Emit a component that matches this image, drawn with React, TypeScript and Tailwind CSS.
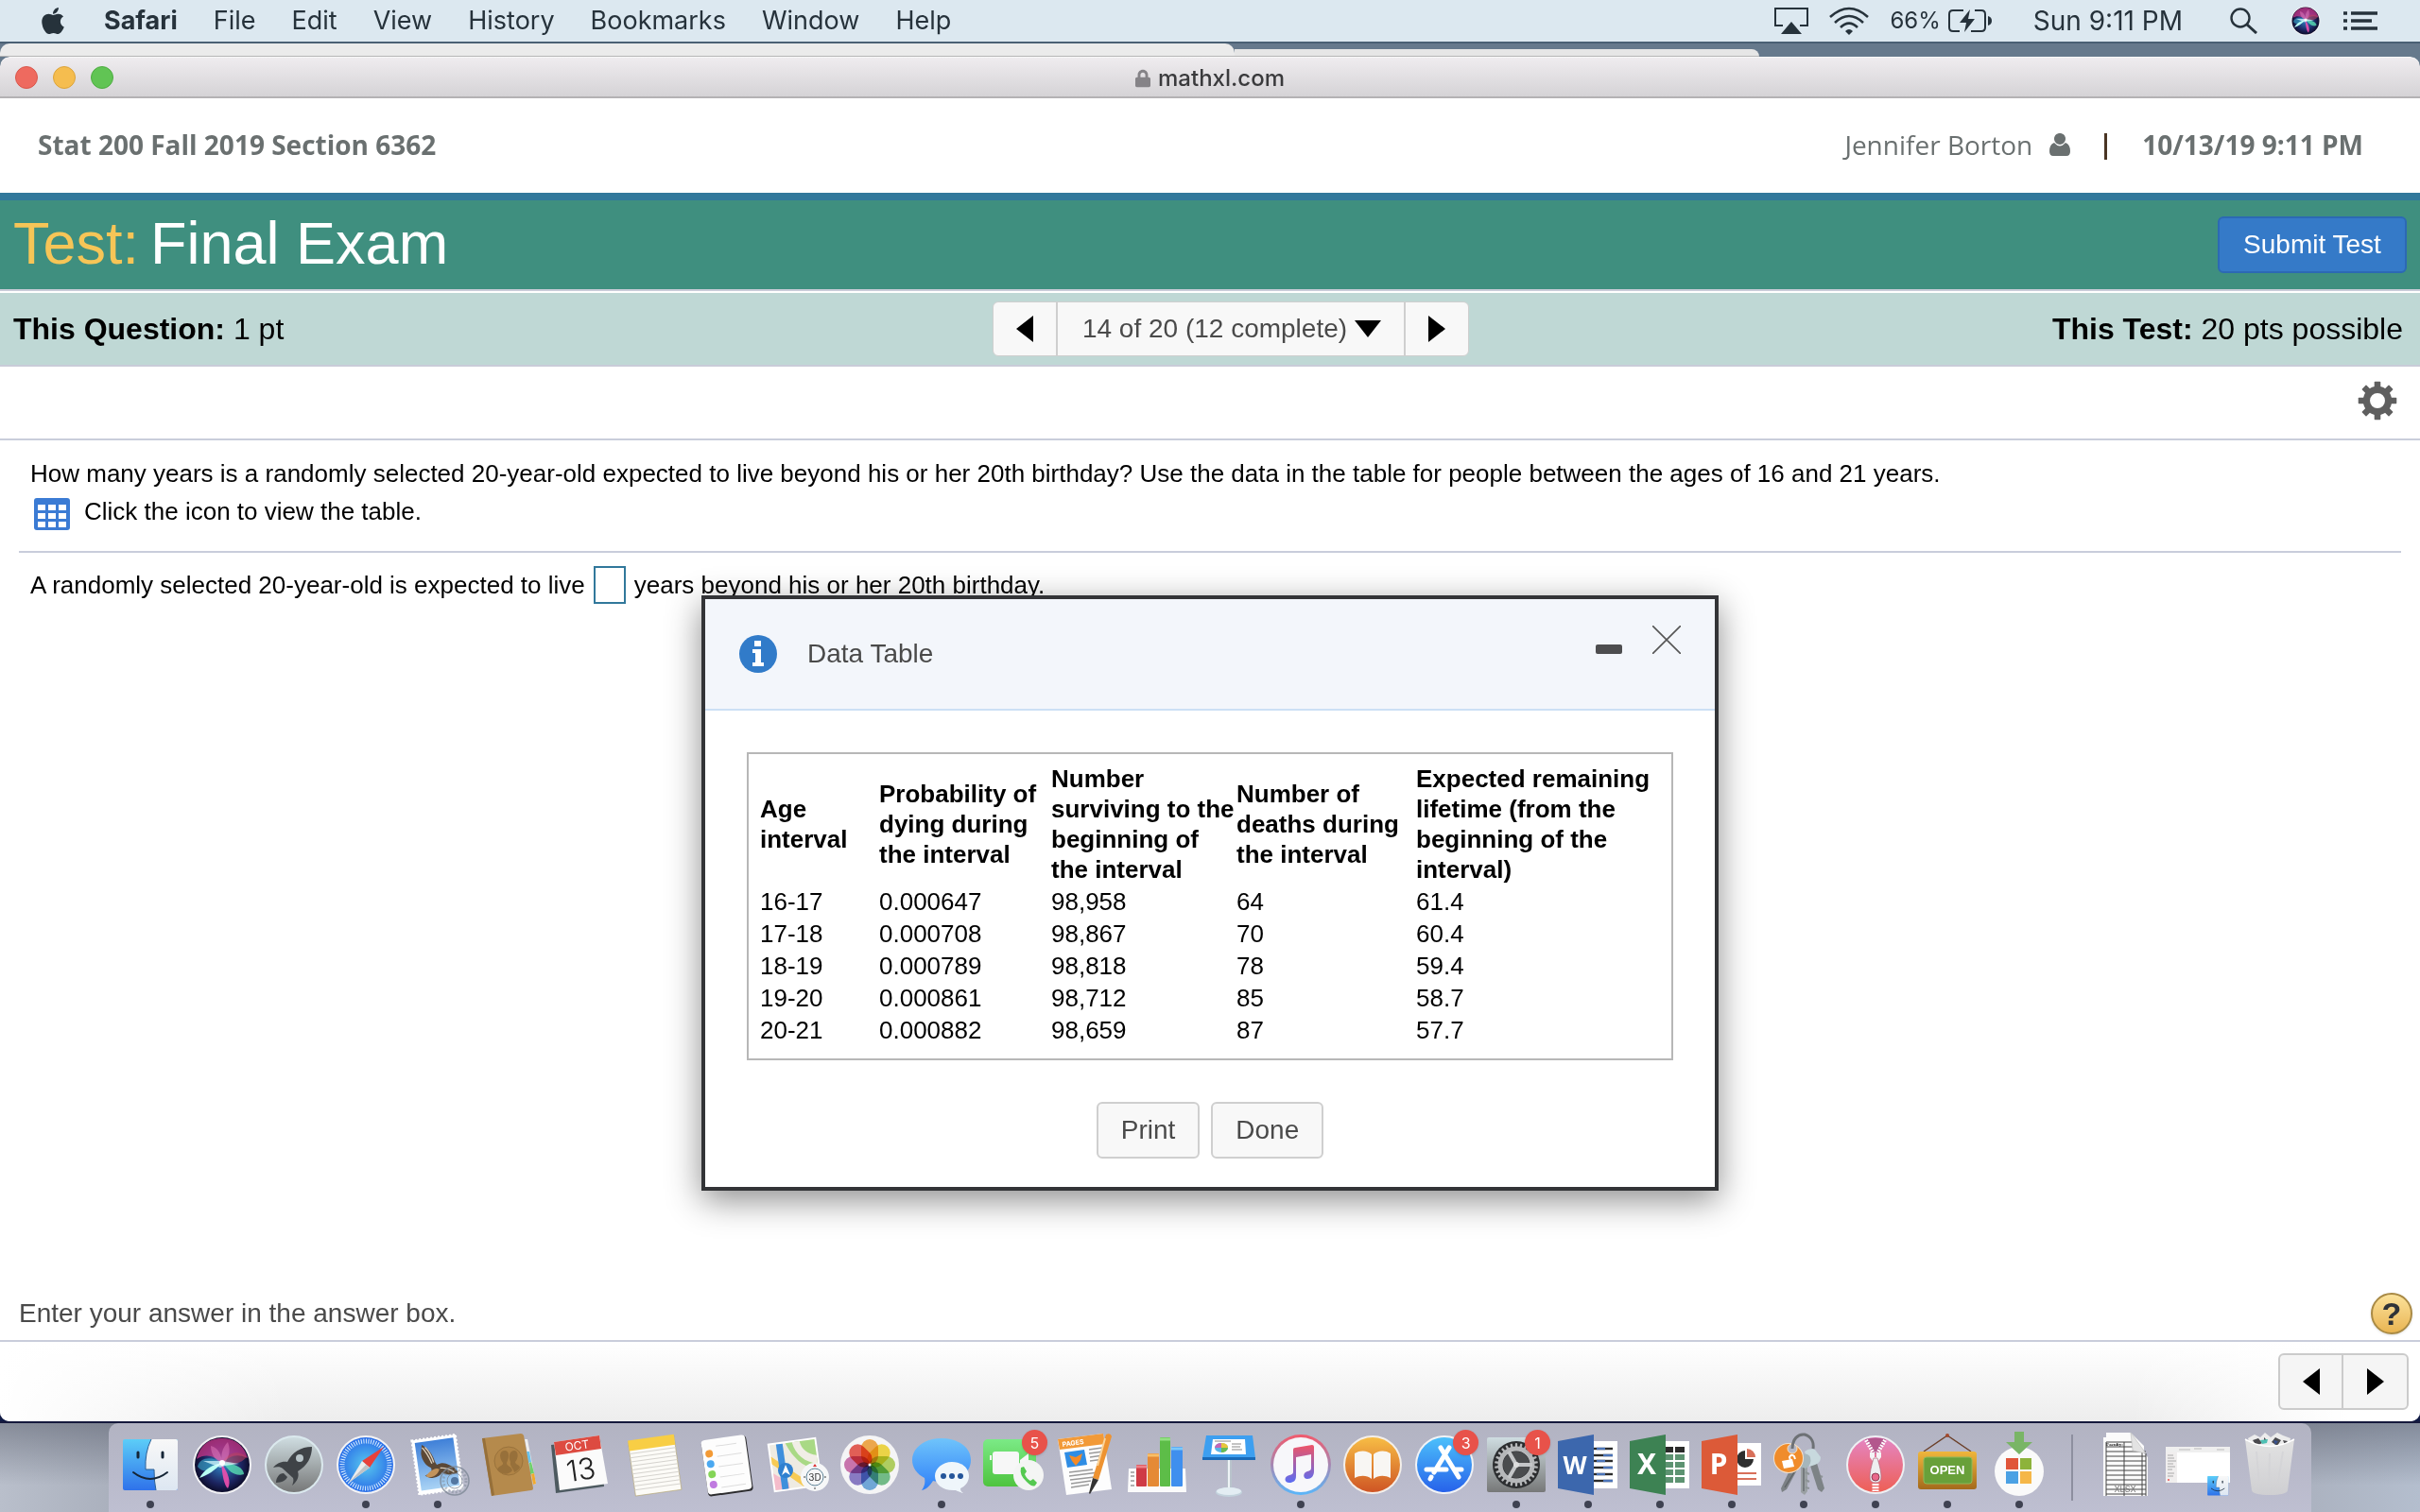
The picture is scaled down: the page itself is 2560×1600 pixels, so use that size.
import type { ReactNode } from 'react';
import { FaApple, FaLock } from 'react-icons/fa';

const menus = ['File', 'Edit', 'View', 'History', 'Bookmarks', 'Window', 'Help'];

const columns = [
	{ width: 'w-[126px]', lines: ['Age', 'interval'] },
	{ width: 'w-[182px]', lines: ['Probability of', 'dying during', 'the interval'] },
	{ width: 'w-[196px]', lines: ['Number', 'surviving to the', 'beginning of', 'the interval'] },
	{ width: 'w-[190px]', lines: ['Number of', 'deaths during', 'the interval'] },
	{ width: 'w-auto', lines: ['Expected remaining', 'lifetime (from the', 'beginning of the', 'interval)'] },
];

const rows = [
	['16-17', '0.000647', '98,958', '64', '61.4'],
	['17-18', '0.000708', '98,867', '70', '60.4'],
	['18-19', '0.000789', '98,818', '78', '59.4'],
	['19-20', '0.000861', '98,712', '85', '58.7'],
	['20-21', '0.000882', '98,659', '87', '57.7'],
];

const SANS = "font-['Liberation_Sans',Arial,sans-serif]";

/* ---------- small glyphs ---------- */

const Triangle = ({ dir }: { dir: 'left' | 'right' | 'down' }) => {
	if (dir === 'down') {
		return (
			<svg className="w-7 h-[18px]" viewBox="0 0 28 18">
				<path d="M0 0H28L14 18Z" />
			</svg>
		);
	}
	return (
		<svg className="w-[18px] h-7" viewBox="0 0 18 28">
			<path d={dir === 'left' ? 'M18 0V28L0 14Z' : 'M0 0V28L18 14Z'} />
		</svg>
	);
};

const SiriArt = () => (
	<>
		<circle cx="32" cy="32" r="31" fill="#f1f1f4" />
		<circle cx="32" cy="32" r="29" fill="url(#siri)" />
		<path d="M5 26C8 12 18 4 32 4C46 4 56 13 59 25C48 20 40 22 32 31C24 22 14 20 5 26Z" fill="#d6398f" opacity=".7" />
		<path d="M32 30C38 18 50 16 58 24C50 32 42 32 32 30Z" fill="#b8425f" opacity=".6" />
		<path d="M6 34C8 24 22 22 32 31C24 38 12 42 6 34Z" fill="#35a3c4" opacity=".65" />
		<path d="M33 30C44 30 55 35 55 42C46 45 39 39 33 30Z" fill="#59e0b4" opacity=".8" />
		<path d="M32 30C24 38 17 43 8 46C14 36 22 32 32 30Z" fill="#b8fff4" />
		<path d="M31 30C38 40 42 50 38 57C34 54 32 42 31 30Z" fill="#f04fae" opacity=".9" />
		<path d="M20 12C28 14 32 22 32 32C26 28 20 22 20 12ZM38 8C42 18 38 28 32 32C30 22 32 14 38 8Z" fill="#ff9bd8" opacity=".35" />
		<path d="M12 28L32 28L50 31L35 33L30 35Z" fill="#dffcff" opacity=".7" />
		<circle cx="32" cy="30" r="3" fill="#fff" />
	</>
);

const FinderArt = () => (
	<>
		<rect x="3" y="5" width="58" height="54" rx="2" fill="url(#finder)" />
		<path d="M33 5H59Q61 5 61 7V57Q61 59 59 59H38Q36 50 36 37H27Q26 19 33 5Z" fill="url(#paper)" />
		<path d="M33 5Q26 19 27 37H36Q36 50 38 59" fill="none" stroke="#2a5f95" strokeWidth="1" />
		<path d="M19 19V24M45 19V24" stroke="#152536" strokeWidth="3" strokeLinecap="round" />
		<path d="M14 40Q32 54 50 40" fill="none" stroke="#152536" strokeWidth="2" strokeLinecap="round" />
	</>
);

const Gear = ({ teeth, r, children }: { teeth: number; r: number; children?: ReactNode }) => (
	<>
		{Array.from({ length: teeth }, (_, i) => (
			<rect
				key={i}
				x={32 - (r * 1.3) / teeth}
				y={32 - r}
				width={(r * 2.6) / teeth}
				height={r * 0.35}
				rx="1"
				transform={`rotate(${(360 / teeth) * i} 32 32)`}
			/>
		))}
		{children}
	</>
);

/* ---------- dock artwork, each drawn in a 64 x 64 box ---------- */

const art: Record<string, ReactNode> = {
	Finder: <FinderArt />,
	Siri: <SiriArt />,
	Launchpad: (
		<>
			<circle cx="32" cy="32" r="31" fill="#dbe9ee" />
			<circle cx="32" cy="32" r="29" fill="url(#silver)" />
			<path
				d="M51 13C39 13 30 19 25 29C19 28 13 31 10 35C14 34 18 34 20 36L31 46C32 49 31 51 30 54C35 50 38 45 36 39C46 33 51 24 51 13Z"
				fill="#3f4347"
			/>
			<path d="M21 41C16 41 13 46 13 51C19 51 24 48 25 45Z" fill="#3f4347" />
			<circle cx="38" cy="25" r="4" fill="#b9c5c9" />
		</>
	),
	Safari: (
		<>
			<circle cx="32" cy="32" r="31" fill="#f3f3f5" />
			<circle cx="32" cy="32" r="29" fill="url(#safari)" />
			<circle cx="32" cy="32" r="25" fill="none" stroke="#d7ecff" strokeWidth="5" strokeDasharray="1 1.6" />
			<path d="M51 13L28 28L36 35Z" fill="#e8413b" />
			<path d="M14 51L28 28L36 35Z" fill="#ececec" />
			<path d="M14 51L32 32L36 35Z" fill="#bfc3c7" />
		</>
	),
	Mail: (
		<>
			<g transform="rotate(-8 31 31)">
				<rect x="8" y="3" width="47" height="58" fill="#fff" stroke="#fff" strokeWidth="2" strokeDasharray="2 2" />
				<rect x="11" y="6" width="41" height="51" fill="url(#sky)" />
				<path
					d="M18 9C20 10 25 15 27 20C29 24 29 29 31 32C36 30 40 31 44 34C48 36 51 40 52 43C47 45 40 45 35 41C33 44 29 46 22 45L17 42L24 39C25 37 25 35 24 34C19 31 16 25 16 18Z"
					fill="#5b4836"
				/>
				<path d="M18 12C22 17 24 23 26 30M21 12C25 17 27 24 28 29M34 36C40 36 44 39 48 42" fill="none" stroke="#d9cdbb" strokeWidth="1.4" />
				<path d="M18 42C23 38 28 34 33 37C31 42 26 45 20 44Z" fill="#c1935c" />
			</g>
			<circle cx="50" cy="49" r="15" fill="none" stroke="#7d8795" strokeWidth="1.5" opacity=".8" />
			<circle cx="50" cy="49" r="12" fill="none" stroke="#7d8795" strokeWidth="3" strokeDasharray="2 2" opacity=".5" />
			<circle cx="50" cy="49" r="8" fill="none" stroke="#7d8795" strokeWidth="1" opacity=".8" />
			<circle cx="50" cy="49" r="4" fill="#41628c" opacity=".8" />
		</>
	),
	Contacts: (
		<>
			<path d="M48 5L51 5L60 52L57 53Z" fill="#eee" />
			<path d="M50 18L53 18L55 29L52 30Z" fill="#69c3ec" />
			<path d="M53 30L55 29L58 41L54 42Z" fill="#6fd06a" />
			<path d="M55 42L58 41L60 52L57 53Z" fill="#f0a92e" />
			<path d="M3 4L44 -1Q46 -1 47 1L57 57Q57 59 55 59L13 65Z" fill="#b58a4c" />
			<path d="M3 4L6 4L16 64L13 65Z" fill="#96703a" />
			<circle cx="31" cy="28" r="15" fill="#b08446" stroke="#9a733c" strokeWidth="1" />
			<path d="M19 37C20 33 26 33 25 30C20 23 22 17 27 17C32 17 32 24 29 30C29 34 34 33 35 38C30 44 23 42 19 37Z" fill="#97703a" />
			<path d="M33 29C30 22 33 16 38 17C42 19 41 26 38 29C38 32 43 32 43 35C41 38 39 39 37 40C36 35 32 34 33 29Z" fill="#97703a" />
		</>
	),
	Calendar: (
		<>
			<path d="M0 11L5 62L56 55L52 5Z" fill="#4d5a60" />
			<path d="M3 8L51 1L60 52L9 59Z" fill="#fbfbfb" />
			<path d="M3 8L51 1L53 15L5 22Z" fill="#dd4b41" />
			<text x="28" y="16" transform="rotate(-8 28 16)" textAnchor="middle" fontSize="12" fill="#fff" className="font-[Inter,sans-serif]">
				OCT
			</text>
			<text x="33" y="48" transform="rotate(-8 33 48)" textAnchor="middle" fontSize="31" fill="#222" className="font-[Inter,sans-serif] font-light">
				13
			</text>
		</>
	),
	Notes: (
		<g transform="rotate(-8 32 32)">
			<rect x="8" y="4" width="49" height="58" fill="#fcfbf7" stroke="#b3a36a" strokeWidth=".6" />
			<rect x="8" y="3" width="49" height="11" fill="#f8ce45" />
			{Array.from({ length: 10 }, (_, i) => (
				<path key={i} d={`M8 ${17 + i * 4.3}H57`} stroke="#d5d3ce" strokeWidth="1" />
			))}
		</g>
	),
	Reminders: (
		<g transform="rotate(-8 32 32)">
			<rect x="9" y="4" width="48" height="59" rx="4" fill="#2c2c2e" />
			<rect x="9" y="3" width="47" height="58" rx="4" fill="#fdfdfd" />
			{['#f39a35', '#4aa8f0', '#84d557', '#c07ae0'].map((c, i) => (
				<g key={c}>
					<circle cx="16" cy={18 + i * 11} r="4" fill={c} />
					<path d={`M24 ${22 + i * 11}H50`} stroke="#ddd" />
				</g>
			))}
			<path d="M24 11H46" stroke="#ddd" />
		</g>
	),
	Maps: (
		<>
			<g transform="rotate(-8 29 32)">
				<rect x="3" y="6" width="52" height="52" fill="#fff" />
				<rect x="5" y="8" width="48" height="48" fill="#eeebe2" />
				<path d="M22 8H53V40C40 38 28 26 22 8Z" fill="#a9d985" />
				<path d="M29 8C31 22 40 31 53 34V25C44 23 38 17 37 8Z" fill="#f1eee6" />
				<path d="M5 20L45 56H35L5 28Z" fill="#f7cb55" />
				<path d="M5 38L20 50V56H5Z" fill="#f5bccb" />
				<path d="M12 8H19V56H12Z" fill="#3f8fdc" />
			</g>
			<circle cx="19" cy="38" r="8" fill="#2f80d0" />
			<path d="M19 32L24 43L19 40L15 43Z" fill="#fff" />
			<circle cx="50" cy="45" r="15" fill="#f6f7f8" />
			<circle cx="50" cy="45" r="9" fill="none" stroke="#5d8296" />
			<path d="M50 31L52 34H48Z" fill="#d33" />
			<path d="M50 56V58M38 45H40M60 45H62" stroke="#444" />
			<text x="50" y="49" textAnchor="middle" fontSize="10" fill="#333" className="font-[Inter,sans-serif]">
				3D
			</text>
		</>
	),
	Photos: (
		<>
			<circle cx="32" cy="32" r="31" fill="#f5f5f6" />
			{['#f5a031', '#f4d629', '#a9cf48', '#5fb778', '#5b9fd8', '#7a68c0', '#c861a4', '#e8473c'].map((c, i) => (
				<rect
					key={c}
					x="23"
					y="5"
					width="18"
					height="27"
					rx="9"
					fill={c}
					opacity=".85"
					className="mix-blend-multiply"
					transform={`rotate(${i * 45} 32 32)`}
				/>
			))}
			<circle cx="32" cy="32" r="1.5" fill="#fff" />
		</>
	),
	Messages: (
		<>
			<path
				d="M32 4C50 4 63 14 63 27C63 41 50 50 32 50C29 50 26 50 23 49C20 54 16 58 11 59C14 55 15 51 14 46C6 42 1 35 1 27C1 14 14 4 32 4Z"
				fill="url(#messages)"
			/>
			<path
				d="M43 29C54 29 61 36 61 44C61 50 57 55 52 57C52 59 53 61 55 62C51 61 49 60 47 59C34 60 25 53 25 44C25 36 33 29 43 29Z"
				fill="#eff6fb"
			/>
			<circle cx="34" cy="44" r="3" fill="#24559a" />
			<circle cx="43" cy="44" r="3" fill="#24559a" />
			<circle cx="52" cy="44" r="3" fill="#24559a" />
		</>
	),
	FaceTime: (
		<>
			<rect x="0" y="5" width="56" height="50" rx="5" fill="url(#green)" />
			<rect x="10" y="18" width="28" height="24" rx="3" fill="#f7f7f7" />
			<path d="M39 27L48 20V38L39 33Z" fill="#f7f7f7" />
			<path d="M8 22V27" stroke="#f7f7f7" strokeWidth="2" />
			<circle cx="48" cy="43" r="16" fill="#f4f5f4" />
			<path d="M40 35L43 34L46 39L44 42Q46 47 50 49L53 47L57 51L55 54Q52 56 46 50Q38 43 40 35Z" fill="#55c951" />
		</>
	),
	Pages: (
		<>
			<path d="M3 5L51 -1L60 58L12 64Z" fill="#fdfdfd" />
			<path d="M3 5L51 -1L53 10L5 16Z" fill="#f29a38" />
			<text x="8" y="13" transform="rotate(-8 8 13)" fontSize="7" fill="#fff" className="font-[Inter,sans-serif] font-bold">
				PAGES
			</text>
			<path d="M10 19L31 16L34 32L13 35Z" fill="#2f8de4" />
			<path d="M15 22L22 24L29 20L27 27L22 33L18 28Z" fill="#f58b27" />
			<path
				d="M36 16L50 14M36 20L51 18M37 24L51 22M37 28L52 26M15 40L40 37M15 44L46 40M16 48L42 45M17 52L38 49M17 56L36 53"
				stroke="#9a9a9a"
				strokeWidth="1.4"
			/>
			<path d="M54 0Q59 -2 60 2L46 48L40 46Z" fill="#ee9331" />
			<path d="M40 46L46 48L37 63L36 62Z" fill="#333" />
			<path d="M53 4L45 33" stroke="#fbd49a" strokeWidth="2" />
		</>
	),
	Numbers: (
		<>
			<path d="M2 36H62L63 61H1Z" fill="#fbfbfb" />
			<path d="M4 40H8M4 44H8M4 49H8M4 54H8" stroke="#999" strokeWidth="1.4" />
			<rect x="10" y="32" width="11" height="23" rx="1" fill="#cf3b45" />
			<rect x="22" y="20" width="12" height="35" rx="1" fill="#e58a35" />
			<rect x="35" y="3" width="11" height="52" rx="1" fill="#5dbd48" />
			<rect x="47" y="13" width="12" height="42" rx="1" fill="#3f8fee" />
			<path d="M10 34H21" stroke="#ee8288" strokeWidth="3" />
			<path d="M22 22H34" stroke="#f8bf68" strokeWidth="3" />
			<path d="M35 5H46" stroke="#93e083" strokeWidth="3" />
			<path d="M47 15H59" stroke="#7cc9fa" strokeWidth="3" />
		</>
	),
	Keynote: (
		<>
			<rect x="30" y="26" width="5" height="34" fill="#b9c4cc" />
			<rect x="31" y="26" width="2" height="34" fill="#eef3f6" />
			<ellipse cx="32" cy="61" rx="14" ry="5" fill="#c3d3dd" />
			<ellipse cx="32" cy="60" rx="13" ry="4" fill="#e3edf3" />
			<path d="M8 1H57L60 25H4Z" fill="#3d9ff0" />
			<path d="M4 24H60V27H4Z" fill="#1a6ab8" />
			<path d="M15 5H49L50 21H13Z" fill="#fff" />
			<ellipse cx="24" cy="14" rx="7" ry="5" fill="#59b4e8" />
			<path d="M24 14V9Q31 9 31 14Z" fill="#e8c53a" />
			<path d="M24 14L31 14Q30 19 24 19Z" fill="#69bb53" />
			<path d="M24 14L17 14Q18 9 24 9Z" fill="#c566b5" />
			<path d="M35 10H45M35 13H44M35 16H46M17 7H34" stroke="#888" />
		</>
	),
	iTunes: (
		<>
			<circle cx="32" cy="32" r="32" fill="url(#itunes)" />
			<circle cx="32" cy="32" r="29" fill="#f7f7fa" />
			<path
				d="M24 16Q24 14 26 14L44 11Q46 11 46 13V39C46 44 43 47 39 47C34 47 34 40 39 39C42 38 43 38 43 35V21L27 24V44C27 49 24 51 20 51C14 51 14 44 20 43C23 42 24 42 24 39Z"
				fill="url(#note)"
			/>
		</>
	),
	Books: (
		<>
			<circle cx="32" cy="32" r="31" fill="#f3efea" />
			<circle cx="32" cy="32" r="29" fill="url(#books)" />
			<path d="M13 20C19 16 27 17 31 21V47C26 43 19 43 13 46ZM51 20C45 16 37 17 33 21V47C38 43 45 43 51 46Z" fill="#f8f6f3" />
		</>
	),
	'App Store': (
		<>
			<circle cx="32" cy="32" r="31" fill="#f1f3f6" />
			<circle cx="32" cy="32" r="29" fill="url(#appstore)" />
			<g stroke="#fff" strokeWidth="5" strokeLinecap="round">
				<path d="M37 14L21 40M28 14L47 45M13 37H34M44 37H50M18 45L17 47" />
			</g>
		</>
	),
	'System Preferences': (
		<>
			<rect x="1" y="3" width="62" height="58" rx="2" fill="url(#silver)" />
			<circle cx="32" cy="32" r="25" fill="#2c2e30" />
			<g fill="#b6b8ba">
				<Gear teeth={26} r={23}>
					<circle cx="32" cy="32" r="17" fill="none" stroke="#b6b8ba" strokeWidth="5" />
				</Gear>
			</g>
			<circle cx="32" cy="32" r="14" fill="#4a4c4e" />
			<path d="M32 32H49M32 32L24 18M32 32L24 46" stroke="#c4c6c8" strokeWidth="4" />
			<circle cx="32" cy="32" r="3" fill="#ddd" />
		</>
	),
	Word: (
		<>
			<rect x="34" y="7" width="29" height="50" fill="#fff" />
			{[15, 22, 28, 35, 42, 49].map((y, i) => (
				<g key={y} strokeWidth="2.4">
					<path d={`M38 ${y}H58`} stroke="#2b2b2b" />
					<path d={`M${i % 2 ? 48 : 41} ${y}H${i % 2 ? 58 : 50}`} stroke="#4b74b8" />
				</g>
			))}
			<path d="M0 7L38 0V64L0 57Z" fill="#3c67ad" />
			<text x="18" y="42" textAnchor="middle" fontSize="26" fill="#fff" className="font-['Noto_Sans',sans-serif] font-bold">
				W
			</text>
		</>
	),
	Excel: (
		<>
			<rect x="34" y="7" width="29" height="50" fill="#fff" />
			{[13, 21, 29, 37, 45].map((y, i) => (
				<path key={y} d={`M38 ${y}H46V${y + 6}H38ZM48 ${y}H58V${y + 6}H48Z`} fill={i === 0 ? '#2b2b2b' : '#5d9371'} />
			))}
			<path d="M0 7L38 0V64L0 57Z" fill="#3d8253" />
			<text x="18" y="42" textAnchor="middle" fontSize="30" fill="#fff" className="font-['Noto_Sans',sans-serif] font-bold">
				X
			</text>
		</>
	),
	PowerPoint: (
		<>
			<rect x="34" y="9" width="29" height="45" fill="#fff" />
			<path d="M46 17A9 9 0 1 0 55 26H46Z" fill="#2e2e2e" />
			<path d="M48 15A9 9 0 0 1 57 24H48Z" fill="#d8705a" />
			<path d="M38 41H58M38 47H58" stroke="#d8705a" strokeWidth="2" />
			<path d="M0 7L38 0V64L0 57Z" fill="#dc5a38" />
			<text x="18" y="42" textAnchor="middle" fontSize="30" fill="#fff" className="font-['Noto_Sans',sans-serif] font-bold">
				P
			</text>
		</>
	),
	'Keychain Access': (
		<>
			<path d="M22 28L29 30L14 58L9 61L8 57Z" fill="#7c8185" />
			<path d="M29 28H36V60L33 64L29 61Z" fill="#9aa0a3" />
			<path d="M32 34V60M12 56L22 40" stroke="#5d6164" strokeWidth="1.2" />
			<path d="M38 30L45 27L54 57L51 61L47 58Z" fill="#7d8386" />
			<path d="M34 40L38 42M34 48L38 50M34 56L38 57M50 44L52 45" stroke="#8d9396" strokeWidth="2" />
			<path d="M33 18Q38 14 44 16L50 24Q50 30 44 32L38 34Z" fill="#c8d9de" />
			<path d="M28 22Q36 18 39 24Q41 32 34 36L28 34Z" fill="#a6b6bb" />
			<circle cx="16" cy="25" r="16" fill="#f3e2cd" />
			<circle cx="16" cy="25" r="15" fill="#f08c2b" />
			<circle cx="20" cy="15" r="5" fill="#b6b8c6" stroke="#f6e0c0" />
			<path d="M20 15C20 5 26 -1 33 0C40 2 43 8 42 15" fill="none" stroke="#6d7175" strokeWidth="3" />
			<path d="M9 28L20 26L22 34L11 36Z" fill="#fff" />
			<path d="M18 27L17 24Q19 20 22 23L23 26" fill="none" stroke="#fff" strokeWidth="2" />
		</>
	),
	Unarchiver: (
		<>
			<circle cx="32" cy="32" r="31" fill="#eef0f3" />
			<circle cx="32" cy="32" r="29" fill="url(#zip)" />
			<path d="M21 5Q32 2 43 5L34 20H30Z" fill="#b3578d" />
			<path d="M22 6L30 20M42 6L34 20" stroke="#fff" strokeWidth="4" strokeDasharray="1.8 1.2" />
			<path d="M32 52V60" stroke="#fff" strokeWidth="7" strokeDasharray="2 1.2" />
			<path d="M26 19H31V24H33V19H38V24L35 28H29L26 24Z" fill="#f3f3f5" />
			<path d="M30 25H34Q38 38 38 45Q38 51 32 51Q26 51 26 45Q26 38 30 25Z" fill="#eeeef0" stroke="#b06a80" strokeWidth=".7" />
			<circle cx="32" cy="45" r="4" fill="#e9688a" stroke="#8d3d52" />
		</>
	),
	'Open Sign': (
		<>
			<path d="M7 18L32 1L57 18" fill="none" stroke="#6b3f28" strokeWidth="1.4" />
			<circle cx="32" cy="1" r="2" fill="#a3492c" />
			<rect x="1" y="18" width="62" height="40" rx="3" fill="url(#gold)" />
			<rect x="7" y="24" width="51" height="28" rx="3" fill="#68a03a" stroke="#8db95b" />
			<text x="32" y="42" textAnchor="middle" fontSize="13" fill="#fff" className="font-['Liberation_Sans',sans-serif] font-bold">
				OPEN
			</text>
		</>
	),
	'Microsoft AutoUpdate': (
		<>
			<circle cx="32" cy="39" r="26" fill="#fafafa" />
			<path d="M18 25H31V37H18Z" fill="#e0553a" />
			<path d="M33 25H45V37H33Z" fill="#8db33b" />
			<path d="M18 39H31V52H18Z" fill="#4ba1e4" />
			<path d="M33 39H45V52H33Z" fill="#f5b748" />
			<path d="M27 -3H37V8H46L32 21L18 8H27Z" fill="#79b566" />
		</>
	),
	'Faculty.xlsx': (
		<>
			<path d="M12 -2H38L52 12V20L56 24V65H9V3H12Z" fill="#fbfbfb" />
			<path
				d="M12 8H40M12 13H44M12 18H54M12 23H54M12 28H54M12 33H54M12 38H54M12 43H54M12 48H54M12 53H54M12 58H54M12 63H54M12 8V65M31 8V65M50 18V65M54 20V65"
				stroke="#444"
				strokeWidth="1"
			/>
			<path d="M38 -2L40 17L54 20Z" fill="#e3e3e3" stroke="#bbb" strokeWidth=".6" />
			<text x="21" y="12" textAnchor="middle" fontSize="5" fill="#111" className="font-['Liberation_Serif',serif] font-bold">
				Faculty:
			</text>
			<text x="32" y="61" textAnchor="middle" fontSize="9" fill="#777" className="font-[Inter,sans-serif]">
				XLSX
			</text>
		</>
	),
	'Minimized Window': (
		<>
			<rect x="-2" y="13" width="68" height="38" fill="#fff" />
			<rect x="-2" y="13" width="68" height="6" fill="#efefef" />
			<rect x="-2" y="19" width="12" height="32" fill="#f0eeee" />
			<path d="M0 22H6M0 25H7M0 28H9M0 31H6M0 34H8M0 37H5M0 41H7M0 44H6" stroke="#aaa" />
			<path d="M0 48H2" stroke="#e77" strokeWidth="2" />
			<path d="M12 16H24M28 15H36M52 16H60" stroke="#bbb" />
			<g transform="translate(41 42) scale(.38)">
				<FinderArt />
			</g>
		</>
	),
	Trash: (
		<>
			<path d="M9 4L16 0L22 3L27 -2L33 3L40 -2L46 1L54 4L52 14H12Z" fill="#ececec" />
			<path d="M14 6L20 4L24 9L18 12ZM34 8L38 3L44 6L40 12ZM26 3L29 6L26 8ZM46 6L51 7L48 11Z" fill="#4a4a4e" />
			<path d="M22 6L30 5L29 9L24 10Z" fill="#4fc0b4" />
			<path d="M36 6L41 7L38 11Z" fill="#37518e" />
			<path d="M6 5Q32 20 58 5L51 59Q50 64 32 64Q14 64 13 59Z" fill="url(#trash)" />
			<path d="M6 5Q32 20 58 5" fill="none" stroke="#fff" strokeWidth="1.5" />
			<path d="M18 18L21 54M32 20L31 56M46 18L41 50" stroke="#d3d3d6" strokeWidth="2" opacity=".7" />
		</>
	),
};

const apps: { name: string; running?: boolean; badge?: number }[] = [
	{ name: 'Finder', running: true },
	{ name: 'Siri' },
	{ name: 'Launchpad' },
	{ name: 'Safari', running: true },
	{ name: 'Mail', running: true },
	{ name: 'Contacts' },
	{ name: 'Calendar' },
	{ name: 'Notes' },
	{ name: 'Reminders' },
	{ name: 'Maps' },
	{ name: 'Photos' },
	{ name: 'Messages', running: true },
	{ name: 'FaceTime', badge: 5 },
	{ name: 'Pages' },
	{ name: 'Numbers' },
	{ name: 'Keynote' },
	{ name: 'iTunes', running: true },
	{ name: 'Books' },
	{ name: 'App Store', badge: 3 },
	{ name: 'System Preferences', running: true, badge: 1 },
	{ name: 'Word', running: true },
	{ name: 'Excel', running: true },
	{ name: 'PowerPoint', running: true },
	{ name: 'Keychain Access', running: true },
	{ name: 'Unarchiver', running: true },
	{ name: 'Open Sign', running: true },
	{ name: 'Microsoft AutoUpdate', running: true },
];

const shelf = [{ name: 'Faculty.xlsx' }, { name: 'Minimized Window' }, { name: 'Trash' }];

const gradients: [string, string, string][] = [
	['finder', '#5ccdf8', '#2f72ea'],
	['paper', '#f8f8f8', '#dde7f2'],
	['silver', '#cfdde1', '#777878'],
	['sky', '#3f80d8', '#a9d3f5'],
	['messages', '#6fc4fb', '#2f7ff8'],
	['green', '#7bea86', '#4fc43f'],
	['itunes', '#f3596b', '#58b7fb'],
	['note', '#ef5466', '#5a6cf2'],
	['books', '#f7bd45', '#cf5524'],
	['appstore', '#4cc0fb', '#2762ea'],
	['zip', '#e486c4', '#ee5f55'],
	['gold', '#efb63c', '#a46a1c'],
	['trash', '#e2e2e2', '#cfcfd2'],
];

const Gradients = () => (
	<svg className="absolute w-0 h-0" aria-hidden="true">
		<defs>
			{gradients.map(([id, from, to]) => (
				<linearGradient key={id} id={id} x1="0" y1="0" x2="0" y2="1">
					<stop offset="0" stopColor={from} />
					<stop offset="1" stopColor={to} />
				</linearGradient>
			))}
			<radialGradient id="siri">
				<stop offset="0" stopColor="#2f86c8" />
				<stop offset=".7" stopColor="#1c2460" />
				<stop offset="1" stopColor="#0d0d2b" />
			</radialGradient>
			<radialGradient id="safari">
				<stop offset="0" stopColor="#58c8ee" />
				<stop offset="1" stopColor="#2a6ee8" />
			</radialGradient>
		</defs>
	</svg>
);

const DockItem = ({ name, running, badge }: { name: string; running?: boolean; badge?: number }) => (
	<button type="button" aria-label={name} className="relative flex flex-col items-center flex-1 pt-3">
		<svg className="w-16 h-16 overflow-visible" viewBox="0 0 64 64">
			{art[name]}
		</svg>
		{running && <span className="w-2 h-2 mt-1.5 rounded-full bg-[#3f4251]" />}
		{badge && (
			<span className="absolute top-[7px] right-0.5 flex items-center justify-center rounded-full w-[27px] h-[27px] bg-[#e8524a] text-white text-base font-[Inter,sans-serif] shadow-sm">
				{badge}
			</span>
		)}
	</button>
);

/* ---------- page parts ---------- */

const MenuBar = () => (
	<header className="flex items-center justify-between h-[46px] pl-10 pr-[45px] bg-[#dce8f0] border-b-2 border-[#4a6074] text-[#26323b] text-[27px] leading-8 font-[Inter,sans-serif]">
		<nav className="flex items-center gap-[38px]">
			<button type="button" aria-label="Apple menu">
				<FaApple className="w-8 h-8" />
			</button>
			<button type="button" className="font-bold">
				Safari
			</button>
			{menus.map((menu) => (
				<button key={menu} type="button">
					{menu}
				</button>
			))}
		</nav>
		<div className="flex items-center">
			<svg className="w-9 h-7" viewBox="0 0 36 28" aria-label="AirPlay">
				<path d="M9 19H1V1H35V19H27" fill="none" stroke="#26323b" strokeWidth="2" />
				<path d="M18 15L29 28H7Z" fill="#26323b" />
			</svg>
			<svg className="w-[42px] h-[30px] ml-[22px]" viewBox="0 0 42 30" aria-label="Wi-Fi">
				<path d="M1 11Q21 -7 41 11M6 17Q21 3 36 17M12 22Q21 13 30 22" fill="none" stroke="#26323b" strokeWidth="2.6" />
				<path d="M17 26Q21 22 25 26L21 30Z" fill="#26323b" />
			</svg>
			<span className="ml-[22px] text-2xl leading-8">66%</span>
			<svg className="w-[46px] h-6 ml-2" viewBox="0 0 46 24" aria-label="Battery charging">
				<path d="M16 1H5Q1 1 1 5V19Q1 23 5 23H12M28 1H35Q39 1 39 5V19Q39 23 35 23H24" fill="none" stroke="#26323b" strokeWidth="2" />
				<path d="M23 0L12 14H19L17 24L28 10H21Z" fill="#26323b" />
				<path d="M42 7Q46 8 46 12Q46 16 42 17Z" fill="#26323b" />
			</svg>
			<span className="ml-11 text-[28px]">Sun 9:11 PM</span>
			<svg className="w-[30px] h-7 ml-[50px]" viewBox="0 0 30 28" fill="none" stroke="#26323b" strokeWidth="2.4" aria-label="Spotlight">
				<circle cx="11" cy="11" r="9.5" />
				<path d="M18 18L28 27" strokeWidth="3" />
			</svg>
			<svg className="w-8 h-8 ml-[34px]" viewBox="0 0 64 64" aria-label="Siri">
				<SiriArt />
			</svg>
			<svg className="w-9 h-5 ml-6" viewBox="0 0 36 20" stroke="#26323b" strokeWidth="3.6" aria-label="Notification Center">
				<path d="M0 2H4M8 2H36M0 10H4M8 10H30M0 18H4M8 18H36" />
			</svg>
		</div>
	</header>
);

const TitleBar = () => (
	<div className="grid grid-cols-[1fr_auto_1fr] items-center h-11 px-4 rounded-t-[10px] bg-linear-to-b from-[#efecef] to-[#d5d3d6] border-t border-t-[#f8f8f8] border-b-2 border-b-[#b4b2b4]">
		<div className="flex gap-4">
			<button type="button" aria-label="Close window" className="w-6 h-6 rounded-full bg-[#ee6a5f] border border-[#d9574c]" />
			<button type="button" aria-label="Minimize window" className="w-6 h-6 rounded-full bg-[#f5bd4f] border border-[#dba33a]" />
			<button type="button" aria-label="Zoom window" className="w-6 h-6 rounded-full bg-[#61c454] border border-[#4dac41]" />
		</div>
		<div className="flex items-center gap-2 pt-0.5 text-[#3a3a3c] text-2xl leading-8 font-[Inter,sans-serif] font-medium">
			<FaLock className="w-4 h-5 text-[#858387]" />
			mathxl.com
		</div>
	</div>
);

const CourseHeader = () => (
	<div className="flex items-center justify-between h-[100px] px-10 pb-0.5 bg-white text-[#6a7070] text-[28px] leading-10 font-['Open_Sans',sans-serif]">
		<h2 className="font-bold">Stat 200 Fall 2019 Section 6362</h2>
		<div className="flex items-center pr-5">
			<span>Jennifer Borton</span>
			<svg className="w-[22px] h-6 ml-[18px]" viewBox="0 0 22 24" fill="#6a7070" aria-hidden="true">
				<path d="M11 0C14 0 17 2 17 6C17 9 14 12 11 12C8 12 5 9 5 6C5 2 8 0 11 0Z" />
				<path d="M5 10Q11 17 17 10Q22 12 22 19Q22 24 18 24H4Q0 24 0 19Q0 12 5 10Z" />
			</svg>
			<span className="w-[3px] h-7 mt-1 ml-9 bg-[#4a3524]" />
			<time className="ml-[37px] font-bold">10/13/19 9:11 PM</time>
		</div>
	</div>
);

const TestBar = () => (
	<div className="flex items-center justify-between h-[104px] px-[14px] bg-[#3f8f7f] border-t-8 border-t-[#31789b] border-b-2 border-b-[#c9ccd8]">
		<h1 className="flex gap-3 pb-1 text-white text-[63px] leading-[80px]">
			<span className="text-[#f6c557]">Test:</span>
			<span>Final Exam</span>
		</h1>
		<button type="button" className="w-[200px] h-[60px] rounded-md bg-[#357ac8] border-2 border-[#2c69b4] text-white text-[28px] leading-8">
			Submit Test
		</button>
	</div>
);

const QuestionBar = () => (
	<div className="flex items-center h-[78px] mt-0.5 px-[14px] bg-[#bfd8d5] border-b-2 border-[#c9ccd8] text-black text-[32px] leading-10">
		<p className="flex-1">
			<b>This Question:</b> 1 pt
		</p>
		<div className="flex h-[58px] ml-12 rounded-md bg-[#f8f8f8] border border-[#cfcfcf] text-[#4a4a4a] text-[28px] leading-8">
			<button type="button" aria-label="Previous question" className="flex items-center justify-center w-[66px] text-black">
				<Triangle dir="left" />
			</button>
			<button type="button" className="flex items-center gap-2 pl-[26px] pr-6 border-x-2 border-[#cfcfcf]">
				14 of 20 (12 complete)
				<span className="text-black">
					<Triangle dir="down" />
				</span>
			</button>
			<button type="button" aria-label="Next question" className="flex items-center justify-center w-[66px] text-black">
				<Triangle dir="right" />
			</button>
		</div>
		<p className="flex-1 pr-1 text-right">
			<b>This Test:</b> 20 pts possible
		</p>
	</div>
);

const DataTableDialog = () => (
	<div
		role="dialog"
		aria-labelledby="dialog-title"
		className="absolute top-[164px] left-1/2 -translate-x-1/2 w-[1076px] bg-white border-4 border-[#333437] shadow-[0_10px_34px_rgba(0,0,0,0.45)]"
	>
		<div className="flex items-center justify-between h-[118px] px-9 bg-[#f3f6fb] border-b-2 border-[#cce0f5] text-[#4a4a4a]">
			<div className="flex items-center gap-8">
				<svg className="w-10 h-10" viewBox="0 0 40 40" aria-hidden="true">
					<circle cx="20" cy="20" r="20" fill="#317bc9" />
					<path d="M16 6H23V12H16ZM14 15H23V29H26V33H14V29H17V19H14Z" fill="#fff" />
				</svg>
				<h3 id="dialog-title" className="text-[28px] leading-8">
					Data Table
				</h3>
			</div>
			<div className="flex items-end gap-8 pb-[30px]">
				<button type="button" aria-label="Minimize" className="w-7 h-[10px] rounded-xs bg-[#4d4d4f]" />
				<button type="button" aria-label="Close">
					<svg className="w-[30px] h-[30px]" viewBox="0 0 30 30" stroke="#555" strokeWidth="1.6">
						<path d="M0 0L30 30M30 0L0 30" />
					</svg>
				</button>
			</div>
		</div>
		<div className="px-11 pt-11 pb-[30px]">
			<div className="pt-[9px] pb-[13px] pl-3 border-2 border-[#b7b7b7]">
				<table className="w-full table-fixed text-black text-[26px] leading-8">
					<thead>
						<tr>
							{columns.map(({ width, lines }) => (
								<th key={lines.join(' ')} scope="col" className={`${width} py-px text-left align-middle font-bold whitespace-nowrap`}>
									{lines.map((line) => (
										<span key={line} className="block">
											{line}
										</span>
									))}
								</th>
							))}
						</tr>
					</thead>
					<tbody>
						{rows.map((row) => (
							<tr key={row[0]}>
								{row.map((cell) => (
									<td key={cell} className="py-px">
										{cell}
									</td>
								))}
							</tr>
						))}
					</tbody>
				</table>
			</div>
			<div className="flex justify-center gap-3 mt-11 text-[#4a4a4a] text-[28px] leading-8">
				<button type="button" className="h-[60px] px-6 rounded-md bg-[#f8f8f8] border-2 border-[#cfcfcf]">
					Print
				</button>
				<button type="button" className="h-[60px] px-6 rounded-md bg-[#f8f8f8] border-2 border-[#cfcfcf]">
					Done
				</button>
			</div>
		</div>
	</div>
);

const Question = () => (
	<main className="relative flex flex-col flex-1 bg-white text-black text-[26px]">
		<div className="px-8 pt-[15px]">
			<p className="leading-10">
				How many years is a randomly selected 20-year-old expected to live beyond his or her 20th birthday? Use the data in the table for people between the
				ages of 16 and 21 years.
			</p>
			<div className="flex items-start gap-[15px] mt-0.5 pl-1">
				<button type="button" aria-label="View the table" className="mt-1">
					<svg className="w-[38px] h-[34px]" viewBox="0 0 38 34">
						<rect width="38" height="34" rx="3" fill="#3b7bd4" />
						<path
							d="M4 7H12V13H4ZM15 7H23V13H15ZM26 7H34V13H26ZM4 16H12V22H4ZM15 16H23V22H15ZM26 16H34V22H26ZM4 25H12V31H4ZM15 25H23V31H15ZM26 25H34V31H26Z"
							fill="#fff"
						/>
					</svg>
				</button>
				<p className="leading-9">Click the icon to view the table.</p>
			</div>
		</div>
		<hr className="mx-5 mt-[22px] border-t-2 border-[#c9cddb]" />
		<div className="flex items-center px-8 pt-[14px] leading-10">
			<label htmlFor="answer">A randomly selected 20-year-old is expected to live</label>
			<input id="answer" type="text" className="w-[34px] h-10 mx-[9px] border-2 border-[#31789b] bg-white" />
			<span>years beyond his or her 20th birthday.</span>
		</div>
		<DataTableDialog />
		<div className="flex items-center justify-between pl-5 pr-2 pb-1.5 mt-auto text-[#4a4a4a]">
			<p className="text-[28px] leading-10">Enter your answer in the answer box.</p>
			<button
				type="button"
				aria-label="Help"
				className="w-11 h-11 rounded-full bg-linear-to-b from-[#fbe29a] to-[#e9b552] border-2 border-[#a98a45] text-[#2f3338] text-[34px] leading-9 font-bold shadow"
			>
				?
			</button>
		</div>
	</main>
);

const App = () => {
	return (
		<div className={`flex flex-col min-h-screen bg-[#66798c] overflow-hidden ${SANS}`}>
			<Gradients />
			<MenuBar />
			{/* windows peeking out behind the front one */}
			<div className="flex items-end h-[14px]">
				<div className="w-[51%] h-[14px] rounded-t-[10px] bg-[#ebebeb] border-b border-[#b5b5b5]" />
				<div className="w-[21.7%] h-2 rounded-tr-[10px] bg-[#e6e6e6] border-b border-[#b5b5b5]" />
			</div>
			<div className="flex flex-col flex-1 bg-[linear-gradient(to_bottom,#66798c_50%,#101a44_50%)]">
				<div className="flex flex-col flex-1 overflow-hidden rounded-[10px]">
					<TitleBar />
					<CourseHeader />
					<div className="bg-white">
						<TestBar />
						<QuestionBar />
					</div>
					<div className="flex items-center justify-end h-[78px] pr-6 pb-1 bg-white border-b-2 border-[#c9cddb]">
						<button type="button" aria-label="Settings">
							<svg className="w-[42px] h-[42px]" viewBox="3 3 58 58" fill="#5f5f5f">
								<Gear teeth={8} r={28}>
									<circle cx="32" cy="32" r="16" fill="none" stroke="#5f5f5f" strokeWidth="10" />
								</Gear>
							</svg>
						</button>
					</div>
					<Question />
					<div className="flex justify-end py-3 pr-3 border-t-2 border-[#c9cddb] bg-[linear-gradient(to_right,white,transparent_12%,transparent_88%,white_97%),linear-gradient(to_bottom,white,#ededed)]">
						<div className="flex h-[60px] rounded-md bg-[#f5f5f5] border-2 border-[#cbcbcb]">
							<button type="button" aria-label="Previous question" className="flex items-center justify-center w-[67px] border-r-2 border-[#cbcbcb]">
								<Triangle dir="left" />
							</button>
							<button type="button" aria-label="Next question" className="flex items-center justify-center w-[67px]">
								<Triangle dir="right" />
							</button>
						</div>
					</div>
				</div>
			</div>
			<footer className="flex justify-center px-[4.5%] border-t-2 border-[#15193c] bg-[linear-gradient(to_bottom,rgba(40,45,60,0.35),transparent_70%),linear-gradient(to_right,#b9bfcb,#a9afbc_5%,#a9afbc_94%,#b4bece)]">
				<nav aria-label="Dock" className="flex flex-1 h-[94px] px-1.5 rounded-t-[10px] bg-linear-to-b from-[#b2b3c2] to-[#bebfd1]">
					{apps.map((app) => (
						<DockItem key={app.name} {...app} />
					))}
					<div className="flex justify-center w-9 pt-3">
						<span className="w-0.5 h-[70px] bg-[#8d8f9f]" />
					</div>
					{shelf.map((item) => (
						<DockItem key={item.name} {...item} />
					))}
				</nav>
			</footer>
		</div>
	);
};

export default App;
